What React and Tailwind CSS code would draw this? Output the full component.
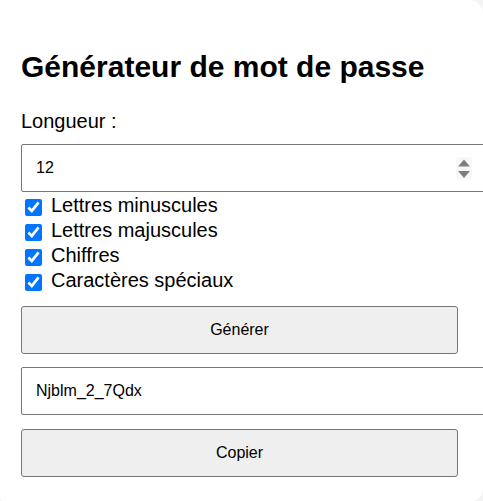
import React from "react";

const font = { fontFamily: '"Liberation Sans", Arial, sans-serif' };

function Option({ label }) {
  return (
    <label className="flex h-[25px] items-start text-[20px] leading-[25px] text-black">
      <input
        type="checkbox"
        defaultChecked
        className="ml-[4px] mt-[7px] h-[17px] w-[17px] shrink-0 accent-[#0075ff]"
      />
      <span className="ml-[9px] pt-[1px]">{label}</span>
    </label>
  );
}

function Spinner() {
  return (
    <div className="pointer-events-none absolute left-[435px] top-[13px] h-[22px] w-[16px] bg-[#f8f8f8]">
      <svg width="16" height="22" viewBox="0 0 16 22" className="block">
        <path d="M8 2.5 L14 9.5 L2 9.5 Z" fill="#7f7f7f" />
        <path d="M2 14 L14 14 L8 21 Z" fill="#7f7f7f" />
      </svg>
    </div>
  );
}

export default function App() {
  return (
    <div className="h-[501px] w-[483px] overflow-hidden bg-[#f3f3f3]" style={font}>
      <div className="h-[501px] w-[483px] overflow-hidden rounded-tr-[14px] rounded-br-[12px] rounded-bl-[4px] bg-white pl-[21px] pt-[50px]">
        <h1 className="text-[30px] font-bold leading-[34px] text-black">
          Générateur de mot de passe
        </h1>
        <div className="mt-[26px] text-[20px] leading-[23px] text-black">Longueur :</div>
        <div className="relative mt-[11px] h-[48px] w-[467px]">
          <input
            type="number"
            defaultValue={12}
            className="box-border block h-[48px] w-[467px] rounded-[2px] border border-[#767676] bg-white px-[14px] text-[16px] text-black [appearance:textfield] [&::-webkit-inner-spin-button]:appearance-none [&::-webkit-outer-spin-button]:appearance-none"
          />
          <Spinner />
        </div>
        <div className="flex flex-col">
          <Option label="Lettres minuscules" />
          <Option label="Lettres majuscules" />
          <Option label="Chiffres" />
          <Option label="Caractères spéciaux" />
        </div>
        <button className="mt-[14px] block h-[48px] w-[437px] rounded-[3px] border border-[#767676] bg-[#efefef] text-[16px] text-black">
          Générer
        </button>
        <input
          type="text"
          readOnly
          value="Njblm_2_7Qdx"
          className="mt-[13px] box-border block h-[48px] w-[467px] rounded-[2px] border border-[#767676] bg-white px-[14px] text-[16px] text-black"
        />
        <button className="mt-[14px] block h-[48px] w-[437px] rounded-[3px] border border-[#767676] bg-[#efefef] text-[16px] text-black">
          Copier
        </button>
      </div>
    </div>
  );
}
